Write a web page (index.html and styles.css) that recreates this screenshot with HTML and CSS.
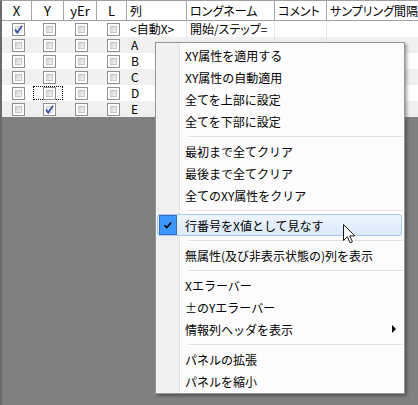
FILE: index.html
```html
<!DOCTYPE html>
<html lang="ja">
<head>
<meta charset="utf-8">
<link rel="stylesheet" href="styles.css">
</head>
<body>
<div class="sheet">
  <div class="row head">
    <div class="c ctr">X</div><div class="c ctr">Y</div><div class="c ctr">yEr</div><div class="c ctr">L</div>
    <div class="c">列</div><div class="c">ロングネーム</div><div class="c">コメント</div><div class="c last">サンプリング間隔</div>
  </div>
  <div class="row">
    <div class="k"><span class="cb on"><svg viewBox="0 0 11 11"><path d="M2 5.5 L4.3 8.6 L9 1.8"/></svg></span></div>
    <div class="k"><span class="cb"></span></div><div class="k"><span class="cb"></span></div><div class="k"><span class="cb"></span></div>
    <div class="t">&lt;自動X&gt;</div><div class="t">開始/ステップ=</div><div class="t"></div><div class="t last"></div>
  </div>
  <div class="row">
    <div class="k"><span class="cb"></span></div><div class="k"><span class="cb"></span></div><div class="k"><span class="cb"></span></div><div class="k"><span class="cb"></span></div>
    <div class="t lat">A</div><div class="t"></div><div class="t"></div><div class="t last"></div>
  </div>
  <div class="row">
    <div class="k"><span class="cb"></span></div><div class="k"><span class="cb"></span></div><div class="k"><span class="cb"></span></div><div class="k"><span class="cb"></span></div>
    <div class="t lat">B</div><div class="t"></div><div class="t"></div><div class="t last"></div>
  </div>
  <div class="row">
    <div class="k"><span class="cb"></span></div><div class="k"><span class="cb"></span></div><div class="k"><span class="cb"></span></div><div class="k"><span class="cb"></span></div>
    <div class="t lat">C</div><div class="t"></div><div class="t"></div><div class="t last"></div>
  </div>
  <div class="row">
    <div class="k"><span class="cb"></span></div><div class="k focus"><span class="cb"></span></div><div class="k"><span class="cb"></span></div><div class="k"><span class="cb"></span></div>
    <div class="t lat">D</div><div class="t"></div><div class="t"></div><div class="t last"></div>
  </div>
  <div class="row">
    <div class="k"><span class="cb"></span></div><div class="k"><span class="cb on"><svg viewBox="0 0 11 11"><path d="M2 5.5 L4.3 8.6 L9 1.8"/></svg></span></div><div class="k"><span class="cb"></span></div><div class="k"><span class="cb"></span></div>
    <div class="t lat">E</div><div class="t"></div><div class="t"></div><div class="t last"></div>
  </div>
</div>

<div class="menu">
  <div class="item">XY属性を適用する</div>
  <div class="item">XY属性の自動適用</div>
  <div class="item">全てを上部に設定</div>
  <div class="item">全てを下部に設定</div>
  <div class="sep"></div>
  <div class="item">最初まで全てクリア</div>
  <div class="item">最後まで全てクリア</div>
  <div class="item">全てのXY属性をクリア</div>
  <div class="sep"></div>
  <div class="item hot"><span class="chk"><svg viewBox="0 0 18 20"><path d="M5.5 10.2 L7.8 12.6 L12.2 7.6"/></svg></span>行番号をX値として見なす</div>
  <div class="sep"></div>
  <div class="item">無属性(及び非表示状態の)列を表示</div>
  <div class="sep"></div>
  <div class="item">Xエラーバー</div>
  <div class="item">±のYエラーバー</div>
  <div class="item">情報列ヘッダを表示<span class="arrow"></span></div>
  <div class="sep"></div>
  <div class="item">パネルの拡張</div>
  <div class="item">パネルを縮小</div>
</div>

<svg class="cursor" width="13" height="20" viewBox="0 0 13 20"><path d="M0.5 0.5 L0.5 16.5 L4.3 12.8 L7 18.8 L9.4 17.8 L6.8 11.9 L11.8 11.9 Z"/></svg>
</body>
</html>
```
FILE: styles.css
```css
html, body {
  margin: 0;
  padding: 0;
}
body {
  width: 418px;
  height: 405px;
  overflow: hidden;
  position: relative;
  background: #808080;
}
.sheet {
  height: 405px;
  box-sizing: border-box;
  border-left: 2px solid #6a6a6a;
  border-top: 1px solid #a0a0a0;
  background: #808080;
  font-family: "Noto Sans CJK JP", sans-serif;
  font-size: 12px;
  font-feature-settings: "palt";
  color: #000;
}
.row {
  display: grid;
  grid-template-columns: 30px 32px 33px 30px 60px 88px 52px 1fr;
  height: 16px;
  background: #ffffff;
}
.row:nth-child(odd) {
  background: #f0f0f0;
}
.row.head {
  height: 19px;
  background: #ffffff;
  border-bottom: 1px solid #a0a0a0;
}
.head .c {
  border-right: 1px solid #a5a5a5;
  line-height: 19px;
  padding-left: 3px;
  white-space: nowrap;
  overflow: hidden;
}
.head .c.ctr {
  padding-left: 0;
  text-align: center;
  font-size: 13px;
}
.head .c.last {
  border-right: none;
}
.k {
  display: flex;
  align-items: center;
  justify-content: center;
  padding-left: 2px;
}
.k.focus {
  outline: 1px dotted #000;
  outline-offset: -2px;
}
.t {
  line-height: 16px;
  padding-left: 3px;
  border-right: 1px solid #e6e6e6;
  white-space: nowrap;
  overflow: hidden;
}
.t.lat {
  padding-left: 4px;
}
.t.last {
  border-right: none;
}
.cb {
  width: 13px;
  height: 13px;
  box-sizing: border-box;
  border: 1px solid #8e8f8f;
  background: #ffffff;
  padding: 2px;
  position: relative;
  display: block;
}
.cb::before {
  content: "";
  display: block;
  width: 7px;
  height: 7px;
  box-sizing: border-box;
  border: 1px solid #c6c6c6;
  background: linear-gradient(135deg, #d2d2d2, #f7f7f7);
}
.cb.on::before {
  border-color: #d6d6d6;
  background: linear-gradient(135deg, #e2e2e2, #fbfbfb);
}
.cb svg {
  position: absolute;
  left: 0;
  top: 0;
  width: 11px;
  height: 11px;
}
.cb svg path {
  fill: none;
  stroke: #3a55a8;
  stroke-width: 1.8;
}

.menu {
  position: absolute;
  left: 155px;
  top: 42px;
  width: 250px;
  box-sizing: border-box;
  border: 1px solid #979797;
  padding: 1px 0;
  background: linear-gradient(to right, #f1f1f1 0 23px, #e2e3e3 23px 24px, #ffffff 24px 25px, #fcfcfc 25px);
  box-shadow: 2px 2px 3px rgba(0, 0, 0, 0.35);
  font-family: "Noto Sans CJK JP", sans-serif;
  font-size: 12px;
  color: #000;
}
.item {
  position: relative;
  display: flex;
  align-items: center;
  height: 20px;
  margin: 0 2px 0 1px;
  border: 1px solid transparent;
  border-radius: 3px;
  padding-left: 27px;
  white-space: nowrap;
}
.item.hot {
  border-color: #a9c9ef;
  background: linear-gradient(#eef5fd, #dbe9fa);
}
.chk {
  position: absolute;
  left: 1px;
  top: 0;
  width: 18px;
  height: 20px;
  box-sizing: border-box;
  border: 1px solid #3570c0;
  background: #3d97fe;
}
.chk svg {
  position: absolute;
  left: -1px;
  top: -1px;
  width: 18px;
  height: 20px;
}
.chk svg path {
  fill: none;
  stroke: #000;
  stroke-width: 1.5;
}
.arrow {
  margin-left: auto;
  margin-right: 5px;
  width: 0;
  height: 0;
  border-left: 4px solid #000;
  border-top: 4px solid transparent;
  border-bottom: 4px solid transparent;
}
.sep {
  height: 1px;
  margin: 4px 1px 2px 32px;
  background: #e0e0e0;
  border-bottom: 1px solid #ffffff;
}
.cursor {
  position: absolute;
  left: 343px;
  top: 224px;
}
.cursor path {
  fill: #ffffff;
  stroke: #1a1a1a;
  stroke-width: 1;
}
```
